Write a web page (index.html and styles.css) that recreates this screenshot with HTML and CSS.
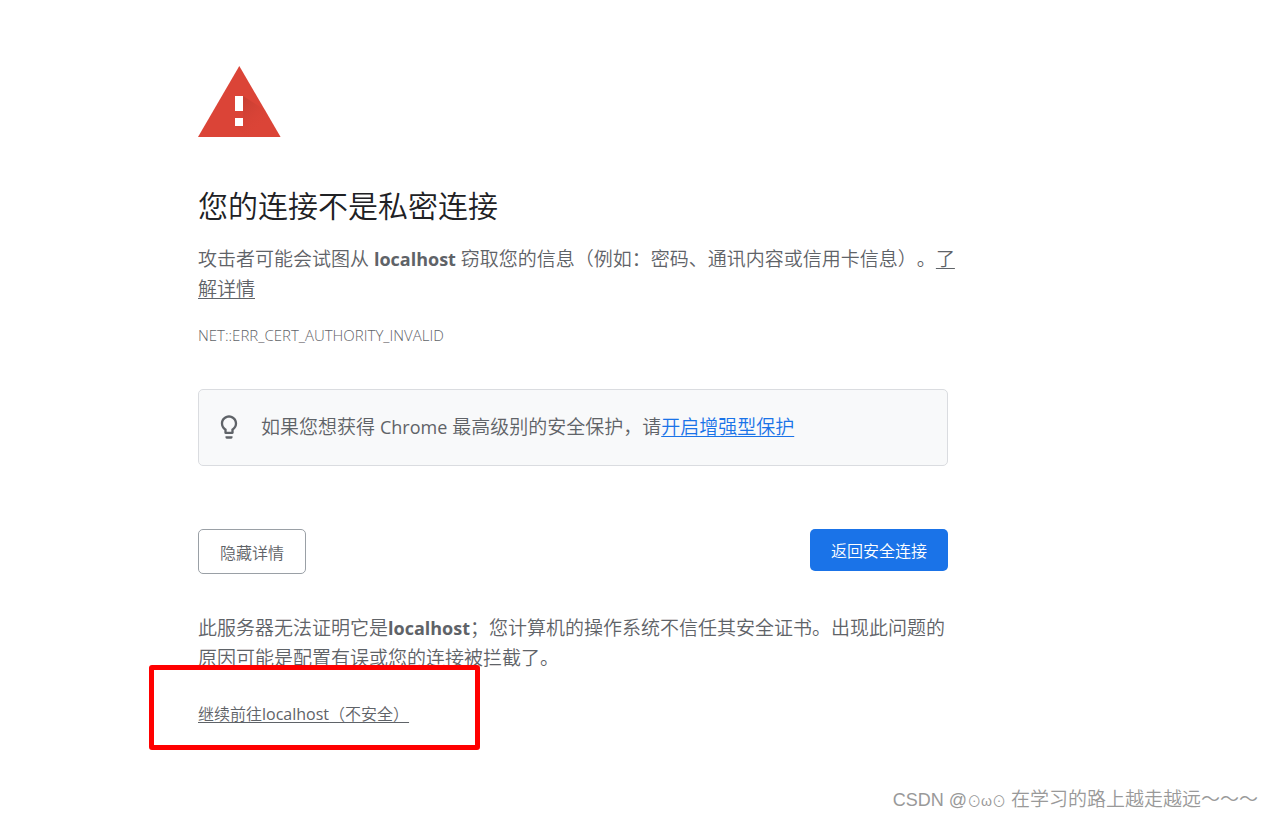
FILE: index.html
```html
<!DOCTYPE html>
<html lang="zh-CN">
<head>
<meta charset="utf-8">
<meta name="viewport" content="width=device-width, initial-scale=1">
<title>隐私设置错误</title>
<link rel="stylesheet" href="styles.css">
</head>
<body>
<main class="interstitial">
  <svg class="warning-icon" viewBox="0 0 83 71" aria-hidden="true">
    <defs>
      <linearGradient id="shade" x1="40" y1="32" x2="66" y2="60" gradientUnits="userSpaceOnUse">
        <stop offset="0" stop-color="#b93a2e" stop-opacity=".75"/>
        <stop offset="1" stop-color="#db4437" stop-opacity="0"/>
      </linearGradient>
    </defs>
    <path fill="#db4437" d="M41.300 0 82.600 71H0z"/>
    <path fill="url(#shade)" d="M45 30 67 44 82.600 71H48.500L37 60V52H45z"/>
    <path fill="#fff" d="M37 30h8v15h-8zM37 52h8v8h-8z"/>
  </svg>
  <h1 class="title">您的连接不是私密连接</h1>
  <p class="message">攻击者可能会试图从 <strong>localhost</strong> 窃取您的信息（例如：密码、通讯内容或信用卡信息）。<a href="#learn">了<br>解详情</a></p>
  <p class="error-code">NET::ERR_CERT_AUTHORITY_INVALID</p>
  <section class="tip">
    <svg class="bulb-icon" viewBox="0 0 24 24" aria-hidden="true">
      <path d="M9 21c0 .5.400 1 1 1h4c.6 0 1-.5 1-1v-1H9v1zm3-19C8.100 2 5 5.100 5 9c0 2.400 1.200 4.500 3 5.700V17c0 .5.400 1 1 1h6c.6 0 1-.5 1-1v-2.300c1.800-1.300 3-3.400 3-5.700 0-3.900-3.100-7-7-7zm2.900 11.100l-.9.600V16h-4v-2.300l-.9-.6C7.800 12.200 7 10.600 7 9c0-2.800 2.200-5 5-5s5 2.200 5 5c0 1.600-.8 3.200-2.100 4.100z"/>
    </svg>
    <p class="tip-text">如果您想获得 <span class="latin">Chrome</span> 最高级别的安全保护，请<a class="tip-link" href="#enhanced">开启增强型保护</a></p>
  </section>
  <div class="actions">
    <button class="button button-secondary" type="button">隐藏详情</button>
    <button class="button button-primary" type="button">返回安全连接</button>
  </div>
  <section class="details">
    <p class="message">此服务器无法证明它是<strong>localhost</strong>；您计算机的操作系统不信任其安全证书。出现此问题的<br>原因可能是配置有误或您的连接被拦截了。</p>
    <p class="proceed"><a href="#proceed">继续前往<span class="latin-small">localhost</span>（不安全）</a></p>
  </section>
</main>
<footer class="watermark"><span class="watermark-author">CSDN @<span class="watermark-face">⊙ω⊙</span></span> 在学习的路上越走越远～～～</footer>
</body>
</html>
```
FILE: styles.css
```css
*,
*::before {
  box-sizing: border-box;
}

body {
  margin: 0;
  min-height: 100vh;
  display: flex;
  flex-direction: column;
  background: #fff;
  color: #5f6368;
  font-family: "Open Sans", "Noto Sans CJK SC", sans-serif;
  font-size: 19px;
  font-weight: 350;
  line-height: 30px;
  text-spacing-trim: space-all;
}

h1,
p {
  margin: 0;
}

a {
  color: inherit;
  text-underline-offset: 2px;
  text-decoration-thickness: 1px;
}

.interstitial {
  width: 100%;
  max-width: 948px;
  padding: 66px 0 0 198px;
}

.warning-icon {
  display: block;
  width: 83px;
  height: 71px;
}

.title {
  margin-top: 50px;
  color: #202124;
  font-size: 30px;
  font-weight: 350;
  line-height: 38px;
}

.message {
  margin-top: 19px;
  white-space: nowrap;
}

.message strong {
  font-size: 18px;
  font-weight: 700;
}

.latin {
  font-size: 18px;
  font-weight: 400;
}

.latin-small {
  font-weight: 400;
}

.error-code {
  margin-top: 21px;
  font-size: 15px;
  font-weight: 300;
  line-height: 20px;
}

.tip {
  display: flex;
  align-items: center;
  gap: 18px;
  margin-top: 44px;
  padding: 22px 16px 23px;
  border: 1px solid #dadce0;
  border-radius: 5px;
  background: #f8f9fa;
}

.bulb-icon {
  width: 28px;
  height: 28px;
  fill: #5f6368;
}

.tip-link {
  color: #1a73e8;
}

.actions {
  display: flex;
  justify-content: space-between;
  align-items: flex-start;
  margin-top: 63px;
}

.button {
  padding: 11px 21px 8px;
  border: 1px solid #9aa0a6;
  border-radius: 5px;
  background: #fff;
  color: #5f6368;
  font: inherit;
  font-size: 16px;
  line-height: 24px;
}

.button-primary {
  padding: 10px 21px 8px;
  border: 0;
  background: #1a73e8;
  color: #fff;
}

.details {
  margin-top: 39px;
}

.proceed {
  position: relative;
  margin-top: 26px;
  font-size: 16px;
}

.proceed::before {
  content: "";
  position: absolute;
  top: -34px;
  left: -49px;
  width: 331px;
  height: 85px;
  border: 5px solid #f00;
  border-radius: 3px;
  pointer-events: none;
}

.watermark {
  margin-top: auto;
  padding: 0 13px 2px;
  color: #999;
  text-align: right;
}

.watermark-author {
  font-family: "Liberation Sans", "Noto Sans CJK SC", sans-serif;
  font-size: 18px;
}

.watermark-face {
  font-size: 14px;
}
```
